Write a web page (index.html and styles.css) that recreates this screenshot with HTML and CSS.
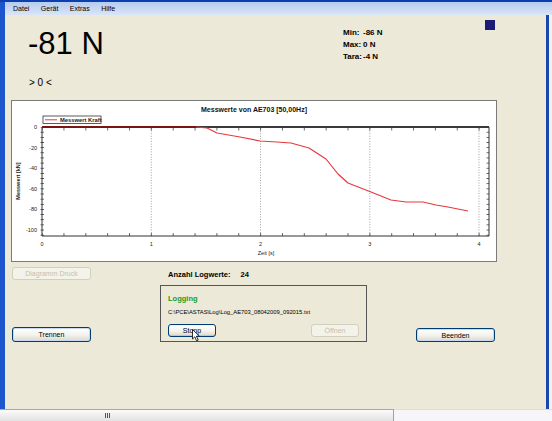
FILE: index.html
```html
<!DOCTYPE html>
<html>
<head>
    <title>Messwerte</title>
    <link rel="stylesheet" href="styles.css">
</head>
<body>
    <div class="window">
        <div class="menubar">
            <span class="menu-item">Datei</span>
            <span class="menu-item">Gerät</span>
            <span class="menu-item">Extras</span>
            <span class="menu-item">Hilfe</span>
        </div>

        <div class="main">
            <div class="header">
                <div class="reading">
                    <div class="value">-81 N</div>
                    <div class="zero">&gt; 0 &lt;</div>
                </div>
                <div class="stats">
                    <span>Min:</span><span>-86 N</span>
                    <span>Max:</span><span>0 N</span>
                    <span>Tara:</span><span>-4 N</span>
                </div>
                <div class="indicator"></div>
            </div>

            <div class="chart">
                <svg class="plot" viewBox="12 101 484 160" width="484" height="160">
                    <defs>
                        <pattern id="tick-x" x="41.6" y="0" width="21.85" height="8" patternUnits="userSpaceOnUse">
                            <rect width="0.8" height="8" fill="#444"/>
                        </pattern>
                        <pattern id="tick-y" x="0" y="126.6" width="8" height="5.15" patternUnits="userSpaceOnUse">
                            <rect width="8" height="0.8" fill="#444"/>
                        </pattern>
                    </defs>

                    <text class="chart-title" x="254" y="111.5" text-anchor="middle">Messwerte von AE703 [50,00Hz]</text>

                    <!-- grid -->
                    <g stroke="#8a8a8a" stroke-width="0.8" stroke-dasharray="1 1.6">
                        <line x1="151.3" y1="128" x2="151.3" y2="236"/>
                        <line x1="260.5" y1="128" x2="260.5" y2="236"/>
                        <line x1="369.8" y1="128" x2="369.8" y2="236"/>
                        <line x1="479" y1="128" x2="479" y2="236"/>
                    </g>

                    <!-- ticks -->
                    <rect x="42" y="233" width="448" height="3" fill="url(#tick-x)"/>
                    <rect x="42" y="128" width="448" height="2.5" fill="url(#tick-x)"/>
                    <rect x="40.5" y="127" width="3.5" height="110" fill="url(#tick-y)"/>
                    <rect x="486.5" y="127" width="2.5" height="110" fill="url(#tick-y)"/>

                    <!-- frame -->
                    <path d="M42 127 V236 H489 V127" fill="none" stroke="#333" stroke-width="1"/>
                    <line x1="42" y1="127" x2="489" y2="127" stroke="#3a3a3a" stroke-width="2"/>

                    <!-- data -->
                    <line x1="42" y1="127" x2="197" y2="127" stroke="#7d1414" stroke-width="2.2"/>
                    <polyline fill="none" stroke="#e8383d" stroke-width="1.2" stroke-linejoin="round"
                        points="196,127 207,128 217,133 240,137 260,141 277,142 291,143 309,148 326,159 338,174 348,183 371,192 391,200 406,202 423,202 436,205 448,207 458,209 468,211"/>

                    <!-- legend -->
                    <rect x="43" y="116" width="58" height="7.5" fill="#fff" stroke="#333" stroke-width="0.8"/>
                    <line x1="45" y1="119.8" x2="57" y2="119.8" stroke="#e8383d" stroke-width="1"/>
                    <text class="legend-text" x="60" y="121.9">Messwert Kraft</text>

                    <!-- labels -->
                    <g class="axis-text" text-anchor="end">
                        <text x="37" y="129">0</text>
                        <text x="37" y="149.6">-20</text>
                        <text x="37" y="170.2">-40</text>
                        <text x="37" y="190.8">-60</text>
                        <text x="37" y="211.4">-80</text>
                        <text x="37" y="232">-100</text>
                    </g>
                    <g class="axis-text" text-anchor="middle">
                        <text x="42" y="246">0</text>
                        <text x="151.3" y="246">1</text>
                        <text x="260.5" y="246">2</text>
                        <text x="369.8" y="246">3</text>
                        <text x="479" y="246">4</text>
                        <text x="266" y="255">Zeit [s]</text>
                    </g>
                    <text class="axis-text axis-title" text-anchor="middle" transform="translate(20 181) rotate(-90)">Messwert [kN]</text>
                </svg>
            </div>

            <div class="controls">
                <button class="xp-button print-button" disabled>Diagramm Druck</button>
                <div class="log-count">Anzahl Logwerte:<span class="log-count-value">24</span></div>

                <button class="xp-button default-button disconnect-button">Trennen</button>
                <div class="logging">
                    <div class="log-title">Logging</div>
                    <div class="log-path">C:\PCE\ASTAS\Log\Log_AE703_08042009_092015.txt</div>
                    <div class="log-buttons">
                        <button class="xp-button hot-button small-button">Stopp</button>
                        <button class="xp-button small-button" disabled>Öffnen</button>
                    </div>
                </div>
                <button class="xp-button default-button close-button">Beenden</button>
            </div>
        </div>

        <div class="statusbar">
            <div class="hscroll"><span class="grip"></span></div>
            <div class="status-rest"></div>
        </div>

        <svg class="cursor" width="9" height="13" viewBox="0 0 9 13">
            <path d="M0.5 0.5 L0.5 10 L2.8 7.8 L4.6 11.8 L6.2 11.1 L4.4 7.2 L7.4 7.2 Z" fill="#fff" stroke="#000" stroke-width="0.8"/>
        </svg>
    </div>
</body>
</html>
```

FILE: styles.css
```css
body {
    margin: 0;
    font-family: "Liberation Sans", Arial, sans-serif;
    color: #000000;
}

.window {
    position: relative;
    width: 552px;
    height: 421px;
    display: flex;
    flex-direction: column;
    background-color: #f2f2f2;
    border-top: 2px solid #0b3fae;
    box-sizing: border-box;
}

/* menu */

.menubar {
    height: 13px;
    display: flex;
    align-items: center;
    gap: 11.5px;
    padding-left: 8px;
    border-left: 5px solid #1d55cc;
    background: linear-gradient(#b6cbee, #dae5f6);
    font-size: 7px;
    box-sizing: border-box;
}

/* main area */

.main {
    width: 549px;
    height: 394px;
    background-color: #ece9d8;
    border-left: 5px solid #1d55cc;
    border-right: 3px solid #1a46b0;
    box-sizing: border-box;
}

.header {
    display: grid;
    grid-template-columns: 315px 142px 10px;
    padding-left: 23px;
    height: 85px;
    box-sizing: border-box;
}

.value {
    font-size: 31px;
    line-height: 30px;
    margin-top: 14px;
}

.zero {
    font-size: 10px;
    line-height: 12px;
    margin-top: 18px;
    padding-left: 1px;
}

.stats {
    display: grid;
    grid-template-columns: 20px auto;
    align-content: start;
    margin-top: 12px;
    font-size: 8px;
    font-weight: bold;
    line-height: 12px;
}

.indicator {
    width: 10px;
    height: 10px;
    margin-top: 5px;
    background-color: #1b1b78;
}

/* chart */

.chart {
    margin-left: 6px;
    width: 486px;
    height: 162px;
    background-color: #ffffff;
    border: 1px solid #7b7b7b;
    box-sizing: border-box;
}

.plot {
    display: block;
}

.chart-title {
    font-family: "Liberation Sans", Arial, sans-serif;
    font-size: 7px;
    font-weight: bold;
    fill: #111111;
}

.legend-text {
    font-family: "Liberation Sans", Arial, sans-serif;
    font-size: 5.8px;
    font-weight: bold;
    fill: #222222;
}

.axis-text {
    font-family: "Liberation Sans", Arial, sans-serif;
    font-size: 5.5px;
    fill: #222222;
}

.axis-title {
    font-weight: bold;
}

/* controls */

.controls {
    display: grid;
    grid-template-columns: 79px 69px 207px 49px 79px;
    grid-template-rows: 13px 57px;
    row-gap: 5px;
    padding: 5px 0 0 7px;
}

.xp-button {
    height: 15px;
    padding: 0;
    display: flex;
    align-items: center;
    justify-content: center;
    font-family: "Liberation Sans", Arial, sans-serif;
    font-size: 7px;
    color: #000000;
    border: 1px solid #003c74;
    border-radius: 3px;
    background: linear-gradient(#ffffff, #f3f2ec 55%, #dcd8cb);
    box-sizing: border-box;
}

.xp-button:disabled {
    color: #c2bfb0;
    border-color: #d2cfc0;
    background: #f4f3ea;
}

.default-button {
    box-shadow: inset 0 0 0 1px #c6d8f2;
}

.hot-button {
    box-shadow: inset 0 -1px 0 #f0c070, inset 0 1px 0 #fff2d2;
}

.print-button {
    grid-column: 1;
    grid-row: 1;
    height: 13px;
}

.log-count {
    grid-column: 3;
    grid-row: 1;
    padding: 2px 0 0 8px;
    font-size: 7.5px;
    font-weight: bold;
    line-height: 11px;
}

.log-count-value {
    margin-left: 10px;
}

.disconnect-button {
    grid-column: 1;
    grid-row: 2;
    align-self: end;
}

.close-button {
    grid-column: 5;
    grid-row: 2;
    align-self: end;
    height: 14px;
}

.logging {
    grid-column: 3;
    grid-row: 2;
    padding: 8px 7px 4px 7px;
    border: 1px solid #555555;
    box-sizing: border-box;
}

.log-title {
    font-size: 7.5px;
    font-weight: bold;
    line-height: 10px;
    color: #1c9a1c;
}

.log-path {
    margin-top: 3px;
    font-size: 5.8px;
    line-height: 10px;
    white-space: nowrap;
}

.log-buttons {
    display: flex;
    justify-content: space-between;
    margin-top: 7px;
}

.small-button {
    width: 48px;
    height: 13px;
}

/* bottom strip */

.statusbar {
    height: 12px;
    display: flex;
}

.hscroll {
    width: 394px;
    display: flex;
    align-items: center;
    padding-left: 105px;
    background: linear-gradient(#fbfbfb, #e2e2e2);
    border-top: 1px solid #a8a8a8;
    border-right: 1px solid #a0a0a0;
    box-sizing: border-box;
}

.grip {
    width: 6px;
    height: 5px;
    background: repeating-linear-gradient(90deg, #555555 0 1px, transparent 1px 2px);
}

.status-rest {
    flex: 1;
    background-color: #f6f6fa;
    border-top: 1px solid #dddddd;
}

.cursor {
    position: absolute;
    left: 192px;
    top: 327px;
}
```
